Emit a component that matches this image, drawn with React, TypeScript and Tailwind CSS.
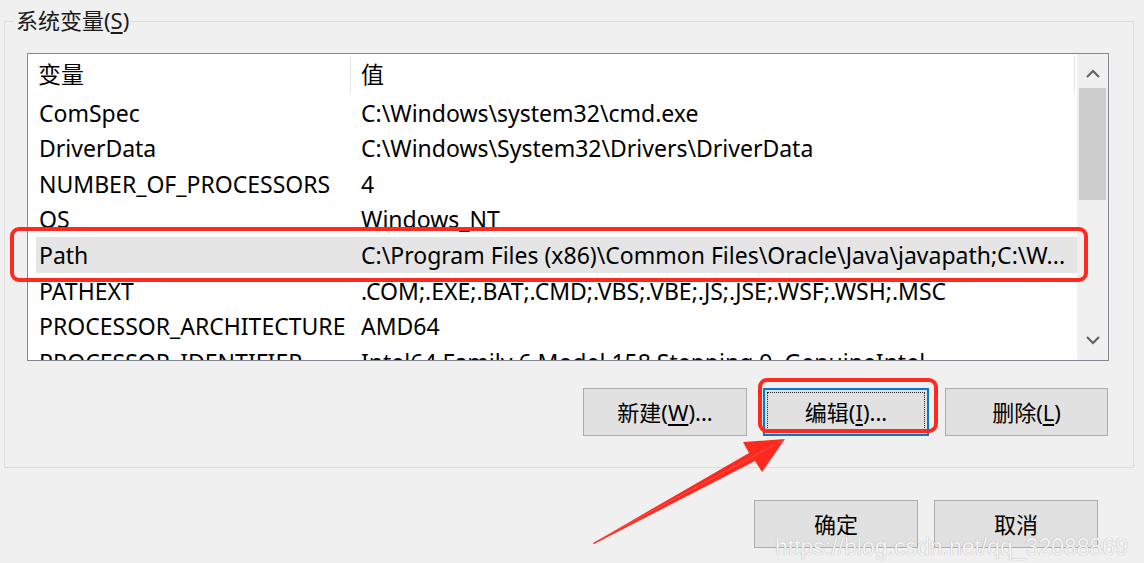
import React from 'react';

const font = { fontFamily: '"Noto Sans", "Noto Sans CJK SC", sans-serif' };

const rows = [
  { name: 'ComSpec', value: 'C:\\Windows\\system32\\cmd.exe' },
  { name: 'DriverData', value: 'C:\\Windows\\System32\\Drivers\\DriverData' },
  { name: 'NUMBER_OF_PROCESSORS', value: '4' },
  { name: 'OS', value: 'Windows_NT' },
  { name: 'Path', value: 'C:\\Program Files (x86)\\Common Files\\Oracle\\Java\\javapath;C:\\W...', selected: true },
  { name: 'PATHEXT', value: '.COM;.EXE;.BAT;.CMD;.VBS;.VBE;.JS;.JSE;.WSF;.WSH;.MSC' },
  { name: 'PROCESSOR_ARCHITECTURE', value: 'AMD64' },
  { name: 'PROCESSOR_IDENTIFIER', value: 'Intel64 Family 6 Model 158 Stepping 9, GenuineIntel' },
];

const Btn: React.FC<{ children: React.ReactNode; focused?: boolean; className?: string }> = ({ children, focused, className }) => (
  <div
    className={`h-[48px] flex items-center justify-center text-[22px] text-black bg-[#e1e1e1] ${
      focused ? 'border-2 border-[#0078d7] p-[2px]' : 'border border-[#adadad]'
    } ${className ?? ''}`}
  >
    {focused ? (
      <div className="w-full h-full flex items-center justify-center border border-dotted border-[#222]">{children}</div>
    ) : (
      children
    )}
  </div>
);

export default function App() {
  return (
    <div className="relative w-[1144px] h-[563px] bg-[#f0f0f0] overflow-hidden text-black" style={font}>
      {/* group box */}
      <div className="relative ml-[4px] mt-[21px] w-[1130px] h-[447px] border border-[#dcdcdc] pl-[22px] pt-[31px]">
        <div className="absolute left-[9px] top-[-17px] bg-[#f0f0f0] px-[2px] text-[22px] leading-[30px] text-[#1a1a1a]">
          系统变量(<span className="underline underline-offset-[3px]">S</span>)
        </div>

        {/* list view */}
        <div className="w-[1082px] h-[308px] border border-[#828790] bg-white flex overflow-hidden">
          <div className="flex-1 flex flex-col overflow-hidden">
            <div className="h-[41px] shrink-0 flex items-center text-[23px] relative">
              <div className="w-[322px] pl-[10px]">变量</div>
              <div className="w-[1px] h-[38px] bg-[#e5e5e5]" />
              <div className="pl-[10px] flex-1">值</div>
              <div className="w-[1px] h-[38px] bg-[#e5e5e5] mr-[2px]" />
            </div>
            {rows.map((r) => (
              <div
                key={r.name}
                className={`ml-[8px] w-[1041px] h-[35.6px] shrink-0 flex items-center text-[23px] whitespace-nowrap ${
                  r.selected ? 'bg-[#e5e5e5]' : ''
                }`}
              >
                <div className="w-[325px] pl-[3px]">{r.name}</div>
                <div className="flex-1 overflow-hidden">{r.value}</div>
              </div>
            ))}
          </div>
          {/* scrollbar */}
          <div className="w-[31px] bg-[#f0f0f0] flex flex-col items-center">
            <div className="h-[34px] w-full flex items-center justify-center pt-[4px]">
              <svg width="14" height="9" viewBox="0 0 14 9">
                <path d="M1 8 L7 2 L13 8" fill="none" stroke="#606060" strokeWidth="2" />
              </svg>
            </div>
            <div className="w-[27px] h-[112px] bg-[#cdcdcd]" />
            <div className="flex-1" />
            <div className="h-[34px] w-full flex items-center justify-center pb-[6px]">
              <svg width="14" height="9" viewBox="0 0 14 9">
                <path d="M1 1 L7 7 L13 1" fill="none" stroke="#606060" strokeWidth="2" />
              </svg>
            </div>
          </div>
        </div>

        {/* buttons */}
        <div className="flex gap-[16px] ml-[556px] mt-[27px]">
          <Btn className="w-[164px]">
            新建(<span className="underline underline-offset-[3px]">W</span>)...
          </Btn>
          <Btn className="w-[166px]" focused>
            编辑(<span className="underline underline-offset-[3px]">I</span>)...
          </Btn>
          <Btn className="w-[163px]">
            删除(<span className="underline underline-offset-[3px]">L</span>)
          </Btn>
        </div>
      </div>

      {/* bottom buttons */}
      <div className="flex gap-[16px] ml-[754px] mt-[32px]">
        <Btn className="w-[164px]">确定</Btn>
        <Btn className="w-[164px]">取消</Btn>
      </div>

      {/* annotations */}
      <div className="absolute left-[10px] top-[227px] w-[1078px] h-[55px] border-[4px] border-[#ff2a1f] rounded-[9px]" />
      <div className="absolute left-[758px] top-[378px] w-[180px] h-[55px] border-[4px] border-[#ff2a1f] rounded-[9px]" />
      <svg className="absolute left-0 top-0" width="1144" height="563" viewBox="0 0 1144 563">
        <polygon
          points="593,543 785,439 762,472 755,461 593.6,544.2"
          fill="#ff2a1f"
        />
        <polygon points="785,439 743,442 749,453 594,542.4 593,543" fill="#ff2a1f" />
      </svg>
      <div
        className="absolute left-[775px] top-[533px] text-[23px] leading-[28px] text-[#f4f4f4] whitespace-nowrap [text-shadow:0_0_1px_#9a9a9a]"
        style={{ fontFamily: '"Liberation Sans", Arial, sans-serif' }}
      >
        https://blog.csdn.net/qq_32088869
      </div>
    </div>
  );
}
